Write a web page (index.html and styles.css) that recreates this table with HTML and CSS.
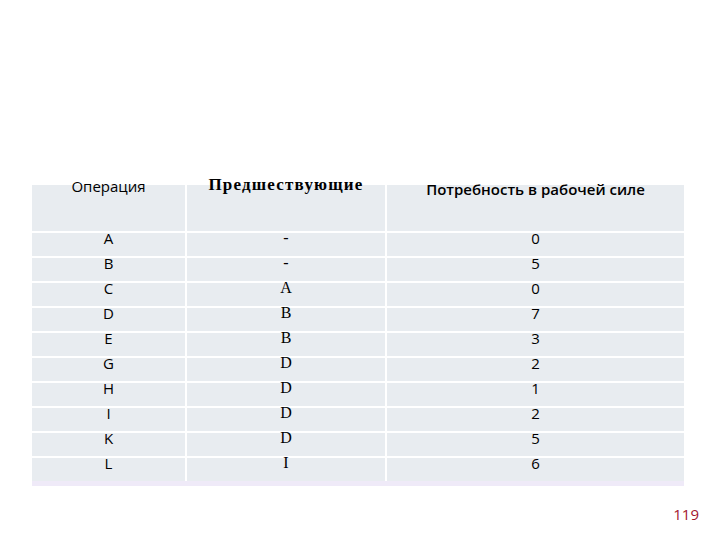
FILE: index.html
```html
<!DOCTYPE html>
<html lang="ru">
<head>
<meta charset="utf-8">
<link rel="stylesheet" href="styles.css">
</head>
<body>
<div class="slide">
  <div class="table">
    <div class="cell head sans"><span>Операция</span></div>
    <div class="cell head serif"><span>Предшествующие</span></div>
    <div class="cell head sans"><span class="h3">Потребность в рабочей силе</span></div>

    <div class="cell sans">A</div><div class="cell serif">-</div><div class="cell num">0</div>
    <div class="cell sans">B</div><div class="cell serif">-</div><div class="cell num">5</div>
    <div class="cell sans">C</div><div class="cell serif">A</div><div class="cell num">0</div>
    <div class="cell sans">D</div><div class="cell serif">B</div><div class="cell num">7</div>
    <div class="cell sans">E</div><div class="cell serif">B</div><div class="cell num">3</div>
    <div class="cell sans">G</div><div class="cell serif">D</div><div class="cell num">2</div>
    <div class="cell sans">H</div><div class="cell serif">D</div><div class="cell num">1</div>
    <div class="cell sans">I</div><div class="cell serif">D</div><div class="cell num">2</div>
    <div class="cell sans">K</div><div class="cell serif">D</div><div class="cell num">5</div>
    <div class="cell sans">L</div><div class="cell serif">I</div><div class="cell num">6</div>
  </div>
  <div class="edge"></div>
  <div class="page">119</div>
</div>
</body>
</html>
```

FILE: styles.css
```css
html, body {
  margin: 0;
  padding: 0;
  background: #ffffff;
}

.slide {
  width: 720px;
  height: 540px;
  box-sizing: border-box;
  padding: 185px 36px 0 32px;
  display: flex;
  flex-direction: column;
}

.table {
  display: grid;
  grid-template-columns: 153px 198px 297px;
  grid-template-rows: 46px repeat(10, 23px);
  gap: 2px;
  width: 652px;
  background: #ffffff;
}

.cell {
  background: #e8ecf0;
  display: flex;
  justify-content: center;
  align-items: flex-start;
  color: #000000;
  font-size: 15px;
  line-height: 10px;
  padding-top: 0;
}

.sans {
  font-family: "Open Sans", "Liberation Sans", sans-serif;
}

.serif {
  font-family: "Liberation Serif", serif;
  font-size: 16px;
}

.num {
  font-family: "Open Sans", "Liberation Sans", sans-serif;
  font-size: 15px;
}

.head span {
  margin-top: -8px;
  font-size: 15px;
  line-height: 18px;
}

.head.serif span {
  font-weight: bold;
  font-size: 17px;
  letter-spacing: 1.2px;
  margin-top: -9px;
}

.head .h3 {
  margin-top: -5px;
  font-weight: 600;
}

.edge {
  width: 652px;
  height: 5px;
  background: #efeaf8;
}

.page {
  align-self: flex-end;
  margin-top: 19px;
  margin-right: -15px;
  font-family: "Open Sans", "Liberation Sans", sans-serif;
  font-size: 15px;
  line-height: 18px;
  color: #a3172f;
}
```
